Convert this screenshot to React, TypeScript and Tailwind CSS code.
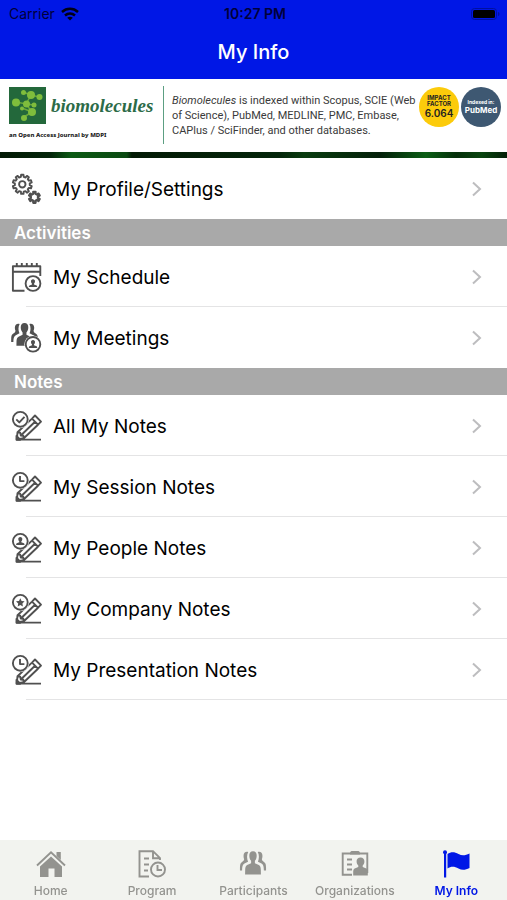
import type { ReactNode } from "react";

function gearPath(cx: number, cy: number, outer: number, inner: number, teeth: number): string {
  const step = (Math.PI * 2) / teeth;
  const points: string[] = [];
  for (let i = 0; i < teeth; i++) {
    const a = i * step - Math.PI / 2;
    const corners: [number, number][] = [
      [-0.3, inner],
      [-0.2, outer],
      [0.2, outer],
      [0.3, inner],
    ];
    for (const [offset, r] of corners) {
      const t = a + offset * step;
      points.push(`${(cx + r * Math.cos(t)).toFixed(2)} ${(cy + r * Math.sin(t)).toFixed(2)}`);
    }
  }
  return `M${points.join("L")}Z`;
}

function RowIcon({ children }: { children: ReactNode }) {
  return (
    <svg
      viewBox="0 0 32 32"
      className="size-8 shrink-0 text-[#505050]"
      fill="none"
      stroke="currentColor"
      strokeWidth="1.9"
      strokeLinejoin="round"
      aria-hidden="true"
    >
      {children}
    </svg>
  );
}

function Bust({ x, y }: { x: number; y: number }) {
  return (
    <path
      transform={`translate(${x} ${y})`}
      d="M0-4.2c1.4 0 2.100 1 2 2.200C1.900-.8 1.400-.2 1 .2v.7l2.600 1c.5.3.6.8.6 1.700h-8.400c0-.9.1-1.400.6-1.700L-1 .9V.2C-1.400-.2-1.900-.8-2-2c-.1-1.200.6-2.200 2-2.200Z"
      fill="currentColor"
      stroke="none"
    />
  );
}

function GearsIcon() {
  return (
    <RowIcon>
      <path d={gearPath(11.3, 11.3, 9.6, 7.5, 10)} />
      <circle cx="11.3" cy="11.3" r="3.2" />
      <path d={gearPath(23.4, 24.3, 5.6, 3.6, 6)} strokeWidth="2.2" />
    </RowIcon>
  );
}

function ScheduleIcon() {
  return (
    <RowIcon>
      <path d="M13.5 29.8H1.9V5.3h27.4v5.4H1.9M5.8 5V2M10.8 5V2M15.8 5V2M20.8 5V2M25.8 5V2M29.3 10v5" />
      <circle cx="22" cy="22.5" r="7.4" />
      <Bust x={22} y={22.5} />
    </RowIcon>
  );
}

function PeopleShape() {
  return (
    <g fill="currentColor" stroke="none">
      <path d="M16 3c2.7 0 4.3 1.8 4.1 4.6-.1 2.2-1 3.6-2 4.6v2.3l4.4 1.8c1.6.7 2.1 2.2 2.2 4.6l.1 4.3H7.2l.1-4.3c.1-2.4.6-3.9 2.2-4.6l4.4-1.8v-2.3c-1-1-1.9-2.4-2-4.6C11.700 4.800 13.300 3 16 3Z" />
      <path d="M10.700 3.800C8 3 5.500 4.300 5.500 7.300c0 1.500.2 2.300.7 3.200L5.700 12l-2.500 1.800c-1.300.8-1.600 2-1.700 5v2.700h2.400c.1-4 .6-5.700 3.100-6.900l3.500-1.500c-1.400-3.300-1.500-6.300.2-9.300Z" />
      <path d="M21.300 3.800c2.700-.8 5.200.5 5.200 3.500 0 1.500-.2 2.300-.7 3.200l.5 1.500 2.500 1.800c1.300.8 1.600 2 1.700 5v2.700h-2.400c-.1-4-.6-5.700-3.100-6.900l-3.500-1.500c1.400-3.300 1.500-6.300-.2-9.300Z" />
    </g>
  );
}

function MeetingsIcon() {
  return (
    <RowIcon>
      <g transform="translate(-1.200 -2) scale(0.92 1.020)">
        <PeopleShape />
      </g>
      <circle cx="22" cy="22.300" r="8.700" fill="white" stroke="none" />
      <circle cx="22" cy="22.300" r="7.300" />
      <Bust x={22} y={22.3} />
    </RowIcon>
  );
}

type Badge = "check" | "clock" | "person" | "star";

function NotesIcon({ badge }: { badge: Badge }) {
  return (
    <RowIcon>
      <path d="M24 5.500 30 11.600 27 14.700 12.800 28.300 5.800 29.400 6.500 22.300 21 8.600ZM21 8.600 27 14.700M6.500 22.300l2.800.5.500 2.700 2.600.3.400 2.500M9.800 25.500 24 11.700M5.200 29.600H30" />
      <path d="M5.500 26v3.700h3.700Z" fill="currentColor" />
      <circle cx="9.300" cy="9.300" r="8.800" fill="white" stroke="none" />
      <circle cx="9.300" cy="9.300" r="7.400" />
      {badge === "check" && <path d="m5.300 9.400 3 3 5.200-5.600" />}
      {badge === "clock" && <path d="M9 4.900v5.200h4.400" />}
      {badge === "person" && <Bust x={9.3} y={9.3} />}
      {badge === "star" && (
        <path
          d="m9.300 5.200 1.300 2.700 3 .4-2.200 2.100.5 3-2.600-1.400-2.600 1.400.5-3L5 8.300l3-.4Z"
          fill="currentColor"
          stroke="none"
        />
      )}
    </RowIcon>
  );
}

function Row({ icon, label, divider = false }: { icon: ReactNode; label: string; divider?: boolean }) {
  return (
    <li>
      <button type="button" className="relative flex h-[61px] w-full items-center gap-2.5 pr-6 pl-[11px] text-left">
        {icon}
        <span className="flex-1 pt-0.5 text-[19px] leading-6 text-black">{label}</span>
        <svg viewBox="0 0 12 16" className="h-4 w-3 shrink-0" fill="none" stroke="#bdbdbf" strokeWidth="2" aria-hidden="true">
          <path d="m2 1.500 7 6.500-7 6.500" />
        </svg>
        {divider && <span className="absolute right-0 bottom-0 left-[26px] h-px bg-[#e4e4e5]" />}
      </button>
    </li>
  );
}

function SectionTitle({ children }: { children: ReactNode }) {
  return (
    <h2 className="bg-[#a9a9a9] pt-0.5 pl-3.5 text-[17px] leading-[25px] font-semibold text-white">{children}</h2>
  );
}

function StatusBar() {
  return (
    <div className="grid h-7 grid-cols-3 items-center pr-1.5 pl-[9px] text-[#00003a]">
      <div className="flex items-center gap-1.5 text-sm">
        Carrier
        <svg viewBox="0 0 18 14" className="h-3.5 w-[18px]" fill="none" stroke="#000018" strokeWidth="2.500" aria-hidden="true">
          <path d="M1 5c4.700-4.200 11.300-4.200 16 0M4 8.500c3-2.600 7-2.600 10 0" />
          <path d="M9 13.500 6.200 10.700c1.700-1.400 3.900-1.400 5.600 0Z" fill="#000018" stroke="none" />
        </svg>
      </div>
      <span className="text-center text-sm font-semibold">10:27 PM</span>
      <svg viewBox="0 0 30 12" className="h-3 w-[30px] justify-self-end" aria-hidden="true">
        <rect x="0.500" y="0.500" width="25" height="11" rx="3" fill="none" stroke="#0010a0" />
        <rect x="2" y="2" width="22" height="8" rx="1.500" fill="black" />
        <path d="M27 4c2 .5 2 3.500 0 4Z" fill="#0010a0" />
      </svg>
    </div>
  );
}

function Banner() {
  return (
    <section aria-label="Sponsor">
      <div className="flex h-[73px] items-start bg-white pr-1.5 pl-[9px]">
        <div className="w-[154px] shrink-0 pt-2">
          <div className="flex items-center gap-[5px]">
            <svg viewBox="0 0 37 37" className="size-[37px] shrink-0" aria-hidden="true">
              <rect width="37" height="37" fill="#23683b" />
              <path d="m22 8-5 9-10-2M17 17l6 8-8 5M17 17l8 1M22 8l8 2M22 8l-8-3M23 25l-10-4" stroke="#6aa83a" strokeWidth="1.500" fill="none" />
              <g fill="#7fbd3c">
                <circle cx="22" cy="8" r="4" />
                <circle cx="7" cy="15.500" r="4" />
                <circle cx="17.500" cy="17" r="3.500" />
                <circle cx="23" cy="25" r="4" />
                <circle cx="15" cy="31" r="3" />
                <circle cx="30.500" cy="10" r="3" />
                <circle cx="14.500" cy="5.500" r="2.500" />
                <circle cx="25" cy="18" r="2.500" />
                <circle cx="13" cy="21.500" r="2" />
              </g>
            </svg>
            <span className="font-['Liberation_Serif',serif] text-[19px] leading-6 font-bold text-[#2c6b48] italic">
              biomolecules
            </span>
          </div>
          <p className="mt-1.5 font-['Noto_Sans',sans-serif] text-[6px] leading-[10px] font-extrabold text-[#222]">
            an Open Access Journal by MDPI
          </p>
        </div>
        <div className="mt-[7px] h-[58px] w-px shrink-0 bg-[#5c9f82]" />
        <p className="min-w-0 flex-1 pt-3.5 pl-2 font-[Roboto,sans-serif] text-[11px] leading-[15px] whitespace-nowrap text-[#3a3a3a]">
          <em>Biomolecules</em> is indexed within Scopus, SCIE (Web
          <br />
          of Science), PubMed, MEDLINE, PMC, Embase,
          <br />
          CAPlus / SciFinder, and other databases.
        </p>
        <div className="flex shrink-0 gap-0.5 pt-2">
          <div className="flex size-10 flex-col items-center justify-center rounded-full bg-[#fccb0b] text-[#222]">
            <span className="text-[6px] leading-[6px] font-bold">IMPACT</span>
            <span className="text-[6px] leading-[6px] font-bold">FACTOR</span>
            <span className="text-[10px] leading-3 font-semibold">6.064</span>
          </div>
          <div className="flex size-10 flex-col items-center justify-center rounded-full bg-[#3e5872] text-white">
            <span className="text-[5px] leading-[6px] font-bold">Indexed in:</span>
            <span className="text-[8px] leading-[10px] font-bold">PubMed</span>
          </div>
        </div>
      </div>
      <div className="h-1.5 bg-[linear-gradient(90deg,#031a05_0%,#04250a_10%,#0c5a14_14%,#0b4a12_25%,#031a05_26%,#04250a_55%,#0a3d10_60%,#04200a_75%,#0c5f16_84%,#06300b_90%,#0a4510_95%,#042008_100%)]" />
    </section>
  );
}

function Tab({ label, active = false, children }: { label: string; active?: boolean; children: ReactNode }) {
  return (
    <button
      type="button"
      aria-current={active ? "page" : undefined}
      className={
        active
          ? "flex flex-col items-center pt-2 text-[#0017e6]"
          : "flex flex-col items-center pt-2 text-[#93938f]"
      }
    >
      <svg viewBox="0 0 32 32" className="size-8" fill="none" stroke="currentColor" strokeWidth="1.900" aria-hidden="true">
        {children}
      </svg>
      <span className={active ? "text-xs leading-[22px] font-semibold" : "text-xs leading-[22px] font-medium"}>
        {label}
      </span>
    </button>
  );
}

export default function App() {
  return (
    <div className="flex min-h-screen flex-col bg-white font-[Inter,sans-serif]">
      <header className="h-[79px] bg-[#0017e6]">
        <StatusBar />
        <h1 className="pt-2.5 text-center text-xl leading-7 font-medium text-white">My Info</h1>
      </header>
      <Banner />
      <main className="flex-1">
        <ul>
          <Row icon={<GearsIcon />} label="My Profile/Settings" />
        </ul>
        <SectionTitle>Activities</SectionTitle>
        <ul>
          <Row icon={<ScheduleIcon />} label="My Schedule" divider />
          <Row icon={<MeetingsIcon />} label="My Meetings" />
        </ul>
        <SectionTitle>Notes</SectionTitle>
        <ul>
          <Row icon={<NotesIcon badge="check" />} label="All My Notes" divider />
          <Row icon={<NotesIcon badge="clock" />} label="My Session Notes" divider />
          <Row icon={<NotesIcon badge="person" />} label="My People Notes" divider />
          <Row icon={<NotesIcon badge="star" />} label="My Company Notes" divider />
          <Row icon={<NotesIcon badge="clock" />} label="My Presentation Notes" divider />
        </ul>
      </main>
      <nav aria-label="Main" className="sticky bottom-0 grid h-[60px] grid-cols-5 bg-[#f2f3ef]">
        <Tab label="Home">
          <path d="M16 8.500 27 18.500V29h-7.500v-8.500h-6V29H5V18.500Z" fill="currentColor" stroke="none" />
          <path d="M2 17.500 16 4.200l14 13.300" />
          <path d="M21.500 4h4.300v8l-4.300-4Z" fill="currentColor" stroke="none" />
        </Tab>
        <Tab label="Program">
          <path d="M13 28.500H3.500V3.200H17l7 7V12M17 3.200v7h7M8 10.500h5M8 16.500h5M8 22.500h4" />
          <circle cx="22" cy="21.500" r="7" />
          <path d="M21.500 17v5h4.500" />
        </Tab>
        <Tab label="Participants">
          <g transform="translate(1.600 0) scale(0.9 1.050)">
            <PeopleShape />
          </g>
        </Tab>
        <Tab label="Organizations">
          <path d="M13 26.800H3.700V5.500h24.600V25M8 11.500h5M8 16.500h5M8 21.500h5" />
          <path d="M11 5.500C11 3.500 12 3 13.500 3h5c1.500 0 2.500.5 2.500 2.500v1H11Z" fill="currentColor" stroke="none" />
          <path
            d="M21.500 9.500c2.600 0 4.100 1.800 3.900 4.200-.1 1.700-.8 2.900-1.700 3.700v1.700l3.600 1.500c1.200.6 1.500 1.900 1.500 3.700v3.200H14.200v-3.200c0-1.800.3-3.100 1.500-3.700l3.600-1.500v-1.700c-.9-.8-1.600-2-1.700-3.700-.2-2.400 1.300-4.200 3.900-4.200Z"
            fill="currentColor"
            stroke="none"
          />
        </Tab>
        <Tab label="My Info" active>
          <g fill="currentColor" stroke="none">
            <circle cx="5" cy="4.200" r="2" />
            <rect x="4" y="4" width="2.200" height="25.500" />
            <path d="M7.500 6c3.500-2.500 7-2.300 11 0 3.500 2 7 1.500 11-.5v14.500c-4 2-7.500 2.500-11 .5-4-2.300-7.500-2.500-11 0Z" />
          </g>
        </Tab>
      </nav>
    </div>
  );
}
